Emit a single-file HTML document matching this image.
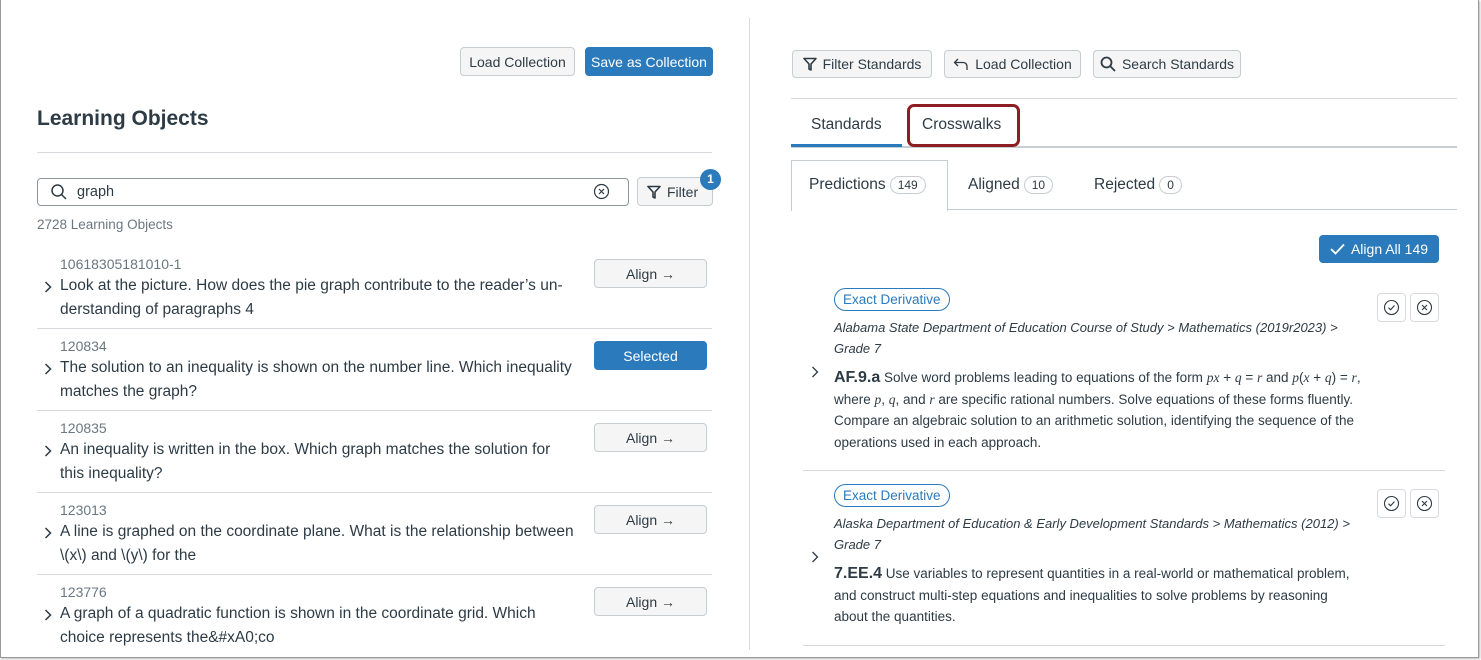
<!DOCTYPE html>
<html><head><meta charset="utf-8"><style>
*{box-sizing:border-box;margin:0;padding:0}
body{width:1481px;height:660px;background:#fff;font-family:"Liberation Sans",sans-serif;color:#2D3B45;position:relative;overflow:hidden}
.a{position:absolute}
.frame{left:0;top:0;width:1479px;height:658px;border:1px solid #9a9a9a;border-top:none;box-shadow:1px 1px 2px #bbb}
.btn{position:absolute;background:#F5F5F5;border:1px solid #C7CDD1;border-radius:4px;font-size:14px;color:#2D3B45;display:flex;align-items:center;justify-content:center;gap:6px;white-space:nowrap}
.blue{background:#2B7ABC;border-color:#2B7ABC;color:#fff}
.t{position:absolute;white-space:nowrap}
.id{font-size:14px;color:#6B7780}
.q{font-size:15.5px;line-height:24px;color:#2D3B45}
.hr{position:absolute;height:1px;background:#D7DADE}
.chev{position:absolute;width:8px;height:12px}
.cnt{display:inline-block;border:1px solid #C7CDD1;border-radius:10px;font-size:12px;padding:1px 7px;margin-left:4px;vertical-align:middle}
.pill{position:absolute;border:1px solid #2B7ABC;border-radius:12px;color:#2B7ABC;font-size:13.5px;height:23px;line-height:21px;padding:0 8px}
.it{font-style:italic;font-size:13px;line-height:21px}
.m{font-size:13.5px;line-height:21.5px}
.ic{position:absolute;width:29px;height:29px;border:1px solid #D7DADE;border-radius:4px;background:#fff;display:flex;align-items:center;justify-content:center}
</style></head><body>
<div class="a frame"></div>
<!-- left -->
<div class="btn" style="left:460px;top:47px;width:115px;height:29px">Load Collection</div>
<div class="btn blue" style="left:585px;top:47px;width:128px;height:29px">Save as Collection</div>
<div class="t" style="left:37px;top:107px;font-size:21px;font-weight:bold">Learning Objects</div>
<div class="hr" style="left:37px;top:152px;width:675px"></div>
<div class="a" style="left:37px;top:178px;width:592px;height:28px;border:1px solid #8B969E;border-radius:4px"></div>
<svg class="a" style="left:50px;top:183px" width="18" height="18" viewBox="0 0 18 18"><circle cx="7.5" cy="7.5" r="5.5" fill="none" stroke="#2D3B45" stroke-width="1.5"/><path d="M11.5 11.5L16 16" stroke="#2D3B45" stroke-width="1.5"/></svg>
<div class="t" style="left:77px;top:184px;font-size:14.5px">graph</div>
<svg class="a" style="left:593px;top:183px" width="17" height="17" viewBox="0 0 17 17"><circle cx="8.5" cy="8.5" r="7" fill="none" stroke="#2D3B45" stroke-width="1.2"/><path d="M6 6L11 11M11 6L6 11" stroke="#2D3B45" stroke-width="1.2"/></svg>
<div class="btn" style="left:637px;top:177px;width:76px;height:29px;justify-content:flex-start;padding-left:9px"><svg width="14" height="14" viewBox="0 0 14 14"><path d="M1 1.5H13L8 7V13L6 12V7Z" fill="none" stroke="#2D3B45" stroke-width="1.6" stroke-linejoin="round"/></svg>Filter</div>
<div class="a" style="left:700px;top:169px;width:21px;height:21px;border-radius:50%;background:#2B7ABC;color:#fff;font-size:12px;font-weight:bold;text-align:center;line-height:21px">1</div>
<div class="t" style="left:37px;top:217px;font-size:13.5px;color:#6B7780">2728 Learning Objects</div>

<div class="t id" style="left:60px;top:256px">10618305181010-1</div>
<svg class="chev" style="left:44px;top:281px" viewBox="0 0 8 12"><path d="M1.5 1L6.5 6L1.5 11" fill="none" stroke="#2D3B45" stroke-width="1.5"/></svg>
<div class="t q" style="left:60px;top:274px">Look at the picture. How does the pie graph contribute to the reader’s un-<br>derstanding of paragraphs 4</div>
<div class="btn" style="left:594px;top:259px;width:113px;height:29px">Align &#x2192;</div>
<div class="hr" style="left:37px;top:328px;width:675px"></div>

<div class="t id" style="left:60px;top:338px">120834</div>
<svg class="chev" style="left:44px;top:363px" viewBox="0 0 8 12"><path d="M1.5 1L6.5 6L1.5 11" fill="none" stroke="#2D3B45" stroke-width="1.5"/></svg>
<div class="t q" style="left:60px;top:356px">The solution to an inequality is shown on the number line. Which inequality<br>matches the graph?</div>
<div class="btn blue" style="left:594px;top:341px;width:113px;height:29px">Selected</div>
<div class="hr" style="left:37px;top:410px;width:675px"></div>

<div class="t id" style="left:60px;top:420px">120835</div>
<svg class="chev" style="left:44px;top:445px" viewBox="0 0 8 12"><path d="M1.5 1L6.5 6L1.5 11" fill="none" stroke="#2D3B45" stroke-width="1.5"/></svg>
<div class="t q" style="left:60px;top:438px">An inequality is written in the box. Which graph matches the solution for<br>this inequality?</div>
<div class="btn" style="left:594px;top:423px;width:113px;height:29px">Align &#x2192;</div>
<div class="hr" style="left:37px;top:492px;width:675px"></div>

<div class="t id" style="left:60px;top:502px">123013</div>
<svg class="chev" style="left:44px;top:527px" viewBox="0 0 8 12"><path d="M1.5 1L6.5 6L1.5 11" fill="none" stroke="#2D3B45" stroke-width="1.5"/></svg>
<div class="t q" style="left:60px;top:520px">A line is graphed on the coordinate plane. What is the relationship between<br>\(x\) and \(y\) for the</div>
<div class="btn" style="left:594px;top:505px;width:113px;height:29px">Align &#x2192;</div>
<div class="hr" style="left:37px;top:574px;width:675px"></div>

<div class="t id" style="left:60px;top:584px">123776</div>
<svg class="chev" style="left:44px;top:609px" viewBox="0 0 8 12"><path d="M1.5 1L6.5 6L1.5 11" fill="none" stroke="#2D3B45" stroke-width="1.5"/></svg>
<div class="t q" style="left:60px;top:602px">A graph of a quadratic function is shown in the coordinate grid. Which<br>choice represents the&amp;#xA0;co</div>
<div class="btn" style="left:594px;top:587px;width:113px;height:29px">Align &#x2192;</div>

<div class="a" style="left:749px;top:18px;width:1px;height:632px;background:#D7DADE"></div>

<!-- right -->
<div class="btn" style="left:792px;top:50px;width:140px;height:28px"><svg width="14" height="14" viewBox="0 0 14 14"><path d="M1 1.5H13L8 7V13L6 12V7Z" fill="none" stroke="#2D3B45" stroke-width="1.6" stroke-linejoin="round"/></svg>Filter Standards</div>
<div class="btn" style="left:944px;top:50px;width:137px;height:28px"><svg width="16" height="14" viewBox="0 0 16 14"><path d="M5 2L1.5 5.5L5 9M1.5 5.5H10Q14 5.5 14 10V13" fill="none" stroke="#2D3B45" stroke-width="1.3"/></svg>Load Collection</div>
<div class="btn" style="left:1093px;top:50px;width:148px;height:28px"><svg width="16" height="16" viewBox="0 0 16 16"><circle cx="6.5" cy="6.5" r="5" fill="none" stroke="#2D3B45" stroke-width="1.8"/><path d="M10 10L15 15" stroke="#2D3B45" stroke-width="1.8"/></svg>Search Standards</div>
<div class="hr" style="left:791px;top:98px;width:666px"></div>
<div class="t" style="left:811px;top:116px;font-size:15.5px">Standards</div>
<div class="a" style="left:791px;top:146px;width:666px;height:1.5px;background:#C7CDD1"></div>
<div class="a" style="left:791px;top:144px;width:111px;height:3px;background:#2B7ABC"></div>
<div class="a" style="left:907px;top:104px;width:113px;height:43px;border:3px solid #8C1D23;border-radius:7px"></div>
<div class="t" style="left:922px;top:116px;font-size:15.5px">Crosswalks</div>
<div class="a" style="left:791px;top:209px;width:666px;height:1px;background:#C7CDD1"></div>
<div class="a" style="left:791px;top:160px;width:157px;height:51px;border:1px solid #C7CDD1;border-bottom:none;background:#fff"></div>
<div class="t" style="left:809px;top:176px;font-size:15.5px">Predictions<span class="cnt">149</span></div>
<div class="t" style="left:968px;top:176px;font-size:15.5px">Aligned<span class="cnt">10</span></div>
<div class="t" style="left:1094px;top:176px;font-size:15.5px">Rejected<span class="cnt">0</span></div>
<div class="btn blue" style="left:1319px;top:235px;width:120px;height:28px"><svg width="15" height="12" viewBox="0 0 15 12"><path d="M1 6L5.5 10.5L14 1.5" fill="none" stroke="#fff" stroke-width="1.8"/></svg>Align All 149</div>

<div class="pill" style="left:834px;top:288px">Exact Derivative</div>
<div class="ic" style="left:1377px;top:293px"><svg width="17" height="17" viewBox="0 0 17 17"><circle cx="8.5" cy="8.5" r="7" fill="none" stroke="#2D3B45" stroke-width="1.1"/><path d="M5.5 8.7L7.6 10.8L11.5 6.5" fill="none" stroke="#2D3B45" stroke-width="1.1"/></svg></div>
<div class="ic" style="left:1410px;top:293px"><svg width="17" height="17" viewBox="0 0 17 17"><circle cx="8.5" cy="8.5" r="7" fill="none" stroke="#2D3B45" stroke-width="1.1"/><path d="M6 6L11 11M11 6L6 11" stroke="#2D3B45" stroke-width="1.1"/></svg></div>
<div class="t it" style="left:834px;top:317px">Alabama State Department of Education Course of Study &gt; Mathematics (2019r2023) &gt;<br>Grade 7</div>
<svg class="chev" style="left:811px;top:366px" viewBox="0 0 8 12"><path d="M1.5 1L6.5 6L1.5 11" fill="none" stroke="#2D3B45" stroke-width="1.3"/></svg>
<div class="t m" style="left:834px;top:367px"><b style="font-size:16px">AF.9.a</b> Solve word problems leading to equations of the form <i style="font-family:'Liberation Serif',serif">px</i> + <i style="font-family:'Liberation Serif',serif">q</i> = <i style="font-family:'Liberation Serif',serif">r</i> and <i style="font-family:'Liberation Serif',serif">p</i>(<i style="font-family:'Liberation Serif',serif">x</i> + <i style="font-family:'Liberation Serif',serif">q</i>) = <i style="font-family:'Liberation Serif',serif">r</i>,<br>where <i style="font-family:'Liberation Serif',serif">p</i>, <i style="font-family:'Liberation Serif',serif">q</i>, and <i style="font-family:'Liberation Serif',serif">r</i> are specific rational numbers. Solve equations of these forms fluently.<br>Compare an algebraic solution to an arithmetic solution, identifying the sequence of the<br>operations used in each approach.</div>
<div class="hr" style="left:803px;top:470px;width:642px"></div>

<div class="pill" style="left:834px;top:484px">Exact Derivative</div>
<div class="ic" style="left:1377px;top:489px"><svg width="17" height="17" viewBox="0 0 17 17"><circle cx="8.5" cy="8.5" r="7" fill="none" stroke="#2D3B45" stroke-width="1.1"/><path d="M5.5 8.7L7.6 10.8L11.5 6.5" fill="none" stroke="#2D3B45" stroke-width="1.1"/></svg></div>
<div class="ic" style="left:1410px;top:489px"><svg width="17" height="17" viewBox="0 0 17 17"><circle cx="8.5" cy="8.5" r="7" fill="none" stroke="#2D3B45" stroke-width="1.1"/><path d="M6 6L11 11M11 6L6 11" stroke="#2D3B45" stroke-width="1.1"/></svg></div>
<div class="t it" style="left:834px;top:513px">Alaska Department of Education &amp; Early Development Standards &gt; Mathematics (2012) &gt;<br>Grade 7</div>
<svg class="chev" style="left:811px;top:551px" viewBox="0 0 8 12"><path d="M1.5 1L6.5 6L1.5 11" fill="none" stroke="#2D3B45" stroke-width="1.3"/></svg>
<div class="t m" style="left:834px;top:563px"><b style="font-size:16px">7.EE.4</b> Use variables to represent quantities in a real-world or mathematical problem,<br>and construct multi-step equations and inequalities to solve problems by reasoning<br>about the quantities.</div>
<div class="hr" style="left:803px;top:645px;width:642px"></div>
</body></html>
